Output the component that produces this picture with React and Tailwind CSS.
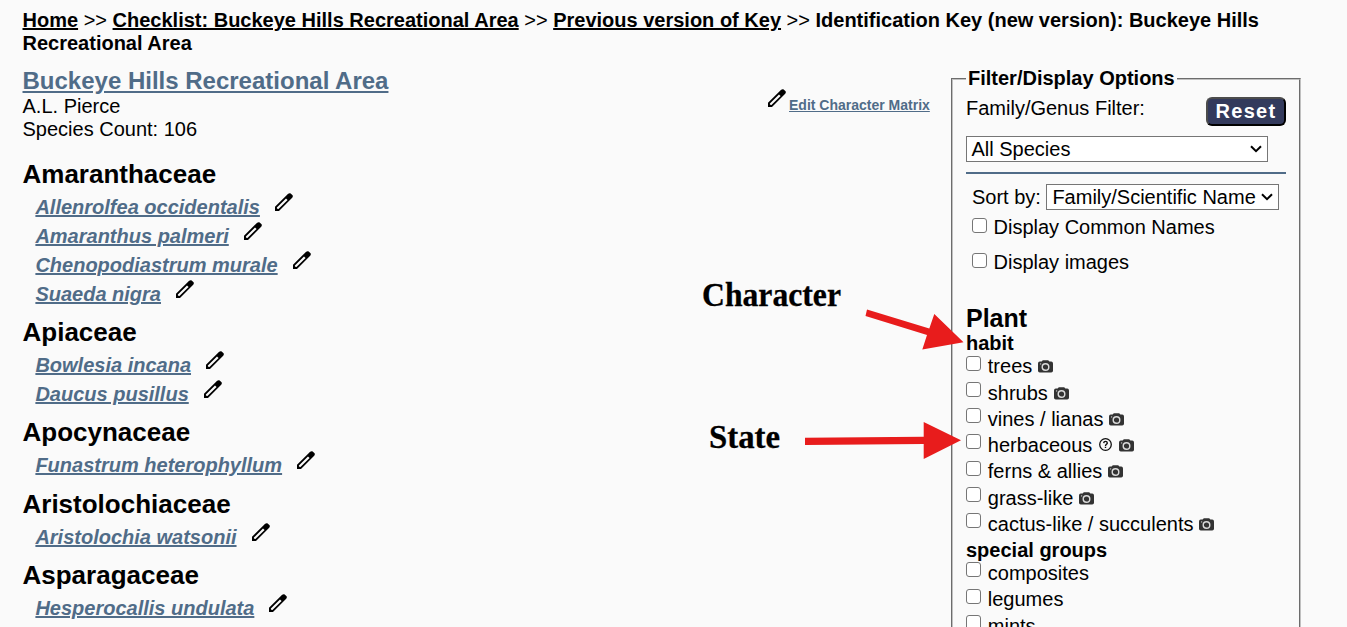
const families = [
  { name: "Amaranthaceae", species: ["Allenrolfea occidentalis", "Amaranthus palmeri", "Chenopodiastrum murale", "Suaeda nigra"] },
  { name: "Apiaceae", species: ["Bowlesia incana", "Daucus pusillus"] },
  { name: "Apocynaceae", species: ["Funastrum heterophyllum"] },
  { name: "Aristolochiaceae", species: ["Aristolochia watsonii"] },
  { name: "Asparagaceae", species: ["Hesperocallis undulata"] },
];

const habits = [
  { label: "trees", camera: true },
  { label: "shrubs", camera: true },
  { label: "vines / lianas", camera: true },
  { label: "herbaceous", help: true, camera: true },
  { label: "ferns & allies", camera: true },
  { label: "grass-like", camera: true },
  { label: "cactus-like / succulents", camera: true },
];

const groups = [{ label: "composites" }, { label: "legumes" }, { label: "mints" }];

function Pencil({ className }) {
  return (
    <svg viewBox="0 0 18 18" className={`h-[18px] w-[18px] shrink-0 ${className}`}>
      <path
        fillRule="evenodd"
        d="M0 18V13.8L12.9.9Q14-.1 15.3.2L17.6 2.3Q18.2 3.7 17.2 4.8L4 18ZM1.9 14.6V15.2L2.8 16.1H3.4L12.6 7 11 5.4Z"
      />
    </svg>
  );
}

function Camera() {
  return (
    <svg viewBox="0 0 15 13" className="ml-[5.9px] mt-[5px] h-[13px] w-[15px] shrink-0">
      <path fill="#333" d="M1.8 1.6H3.6L4.8.2H10.2L11.4 1.6H13.2Q15 1.6 15 3.4V10.7Q15 12.5 13.2 12.5H1.8Q0 12.5 0 10.7V3.4Q0 1.6 1.8 1.6Z" />
      <circle cx="7.5" cy="7" r="3.3" fill="#333" stroke="#dcdcdc" strokeWidth="1.4" />
      <circle cx="2.6" cy="3.9" r=".7" fill="#ccc" />
    </svg>
  );
}

function Help() {
  return (
    <svg viewBox="0 0 13 13" className="ml-[6.4px] mr-px mt-[4px] h-[13px] w-[13px] shrink-0" fill="none" stroke="#111">
      <circle cx="6.5" cy="6.5" r="5.8" strokeWidth="1.3" />
      <path d="M4.7 5.1Q4.8 3.4 6.5 3.4T8.3 5C8.3 6.2 6.5 6.3 6.5 7.9M6.5 8.7V10" strokeWidth="1.4" />
    </svg>
  );
}

function Box({ className = "" }) {
  return (
    <input
      type="checkbox"
      className={`h-[15px] w-[15px] shrink-0 appearance-none rounded-[3px] border border-[#767676] bg-white ${className}`}
    />
  );
}

function Dropdown({ children, className }) {
  return (
    <div className={`flex h-[26px] items-center justify-between border border-[#767676] bg-white ${className}`}>
      <span className="whitespace-nowrap leading-[23px]">{children}</span>
      <svg viewBox="0 0 12 8" className="h-2 w-3 shrink-0" fill="none" stroke="#000" strokeWidth="2">
        <path d="M1 1.3 6 6.2 11 1.3" />
      </svg>
    </div>
  );
}

function StateRow({ label, help, camera }) {
  return (
    <div className="flex h-[26.25px] items-start">
      <Box className="mt-[0.4px]" />
      <span className="ml-[6.8px] whitespace-nowrap">{label}</span>
      {help && <Help />}
      {camera && <Camera />}
    </div>
  );
}

export default function App() {
  return (
    <div className="relative h-[627px] w-[1347px] overflow-hidden bg-[#fafafa] font-['Liberation_Sans',Arial,sans-serif] text-[20px] leading-[23px] text-black">
      <nav className="pl-[22.5px] pr-6 pt-[9px] font-bold">
        <a className="underline">Home</a> <span className="font-normal">&gt;&gt;</span>{" "}
        <a className="underline">Checklist: Buckeye Hills Recreational Area</a> <span className="font-normal">&gt;&gt;</span>{" "}
        <a className="underline">Previous version of Key</a> <span className="font-normal">&gt;&gt;</span> Identification Key (new version): Buckeye Hills
        Recreational Area
      </nav>
      <main className="flex pl-[22.5px] pt-3">
        <section className="w-[744.5px] shrink-0">
          <h1 className="text-[24px] font-bold leading-[28px] text-[#506c88] underline">Buckeye Hills Recreational Area</h1>
          <p>A.L. Pierce</p>
          <p>Species Count: 106</p>
          <div className="mt-[17.65px] flex flex-col gap-[12.3px]">
            {families.map((f) => (
              <div key={f.name}>
                <h2 className="text-[26px] font-bold leading-[30px]">{f.name}</h2>
                {f.species.map((s) => (
                  <div key={s} className="flex h-[29px] items-start pl-[12.9px]">
                    <a className="mt-[7px] whitespace-nowrap font-bold italic text-[#506c88] underline">{s}</a>
                    <Pencil className="ml-[15.1px] mt-[4px]" />
                  </div>
                ))}
              </div>
            ))}
          </div>
        </section>
        <div className="flex w-[184px] shrink-0 items-start pt-[22px]">
          <Pencil className="ml-px" />
          <a className="ml-[3px] mt-2 whitespace-nowrap text-[14px] font-bold leading-4 text-[#506c88] underline">Edit Character Matrix</a>
        </div>
        <fieldset className="h-[640px] w-[348px] shrink-0 border-2 border-[#c0c0c0] px-[13px] [border-style:groove]">
          <legend className="px-[2px] font-bold">Filter/Display Options</legend>
          <div className="mt-[7px] flex h-[39px] w-[320px] items-start justify-between">
            <span>Family/Genus Filter:</span>
            <button className="h-[29px] w-20 rounded-[6px] border-2 border-b-black border-l-[#4c4c4c] border-r-black border-t-[#4c4c4c] bg-[#333a5c] font-bold leading-[25px] tracking-[1.3px] text-white">
              Reset
            </button>
          </div>
          <Dropdown className="w-[302px] pl-[4.5px] pr-[5px]">All Species</Dropdown>
          <div className="mt-[10px] h-[2px] w-[320px] bg-[#506c88]" />
          <div className="mt-[10px] flex items-center pl-[6px]">
            <span className="w-[74px]">Sort by:</span>
            <Dropdown className="w-[233px] pl-[5.4px] pr-[5px]">Family/Scientific Name</Dropdown>
          </div>
          <label className="mt-[6px] flex items-start pl-[6px]">
            <Box className="mt-[2px]" />
            <span className="ml-[6.5px]">Display Common Names</span>
          </label>
          <label className="mt-[12px] flex items-start pl-[6px]">
            <Box className="mt-[2px]" />
            <span className="ml-[6.5px]">Display images</span>
          </label>
          <h2 className="mt-[30px] text-[25px] font-bold leading-[28px]">Plant</h2>
          <h3 className="mb-[0.3px] font-bold">habit</h3>
          {habits.map((h) => (
            <StateRow key={h.label} {...h} />
          ))}
          <h3 className="font-bold">special groups</h3>
          {groups.map((g) => (
            <StateRow key={g.label} {...g} />
          ))}
        </fieldset>
      </main>
      <svg viewBox="0 0 1347 627" className="pointer-events-none absolute left-0 top-0 h-[627px] w-[1347px]">
        <g fill="#e81c1c">
          <path d="M867 309.5 929.3 328.5 934.3 314 963.5 342.3 922.3 349.5 927 335 865.5 316Z" />
          <path d="M805 437.7 923.7 436.7V422L961 440.3 923.7 459V443.9L805 444.9Z" />
        </g>
        <g className="font-['Liberation_Serif',serif] text-[34px] font-bold" stroke="#000" strokeWidth=".3">
          <text x="702" y="306" textLength="139" lengthAdjust="spacingAndGlyphs">Character</text>
          <text x="709" y="448" textLength="71" lengthAdjust="spacingAndGlyphs">State</text>
        </g>
      </svg>
    </div>
  );
}
